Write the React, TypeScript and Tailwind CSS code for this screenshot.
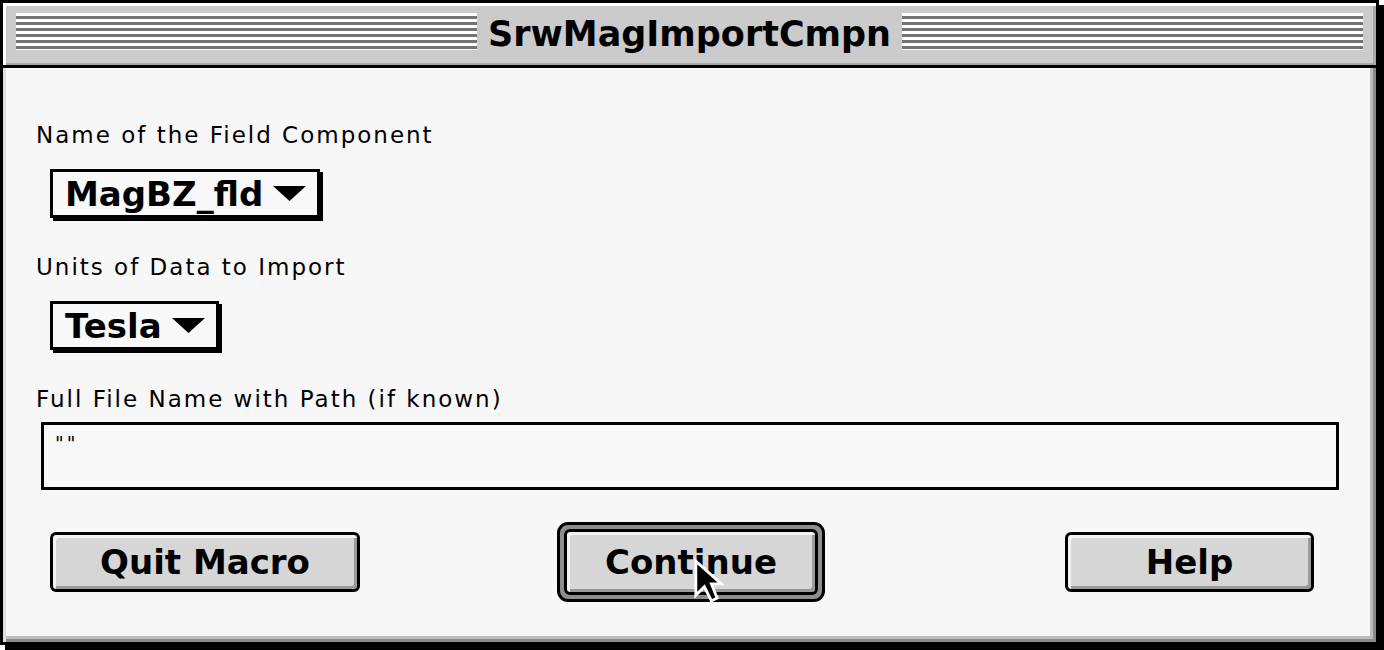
import React from "react";

const labelCls = "text-[23px] leading-[30px] tracking-[2px] text-black";

export default function App() {
  return (
    <div className="w-[1384px] h-[650px] bg-white [font-family:'DejaVu_Sans',sans-serif] text-black">
      <div className="w-[1379px] h-[645px] border-[3px] border-black shadow-[5px_5px_0_#000] flex flex-col">
        <TitleBar title="SrwMagImportCmpn" />
        <div className="flex-1 flex flex-col bg-[#f7f7f7] shadow-[inset_3px_0_0_#dedede,inset_-3px_-3px_0_#8a8a8a,inset_-6px_-6px_0_#bdbdbd] pl-[33px]">
          <div className={`${labelCls} mt-[52px]`}>Name of the Field Component</div>
          <PopUp value="MagBZ_fld" className="mt-[19px]" />
          <div className={`${labelCls} mt-[34px]`}>Units of Data to Import</div>
          <PopUp value="Tesla" className="mt-[19px]" />
          <div className={`${labelCls} mt-[34px]`}>Full File Name with Path (if known)</div>
          <div className="mt-[8px] ml-[5px] w-[1298px] h-[68px] border-[3px] border-black bg-[#f8f8f8] pl-[11px] pt-[6px] text-[19px] leading-[24px] tracking-[3px]">
            ""
          </div>
          <div className="mt-[32px] flex items-center h-[80px]">
            <Button label="Quit Macro" className="ml-[14px] w-[310px]" />
            <div className="relative ml-[197px] w-[268px] h-[80px] rounded-[11px] border-[3px] border-black bg-[#8e8e8e] p-[4px] flex">
              <Button label="Continue" className="w-full h-full" />
              <Cursor />
            </div>
            <Button label="Help" className="ml-[240px] w-[249px]" />
          </div>
        </div>
      </div>
    </div>
  );
}

const TitleBar: React.FC<{ title: string }> = ({ title }) => {
  return (
    <div className="h-[65px] shrink-0 border-b-[3px] border-black bg-[#cbcbcb] shadow-[inset_3px_3px_0_#fff,inset_-3px_-2px_0_#a8a8a8] flex items-start px-[13px]">
      <Stripes />
      <div className="px-[11px] h-[62px] flex items-center text-[35px] font-bold leading-none">{title}</div>
      <Stripes />
    </div>
  );
};

const Stripes = () => (
  <div className="flex-1 mt-[10px] h-[37px] bg-[repeating-linear-gradient(to_bottom,#ffffff_0px,#ffffff_3px,#737373_3px,#737373_6px)]" />
);

type PopUpProps = { value: string; className?: string };

const PopUp: React.FC<PopUpProps> = ({ value, className }) => {
  return (
    <div className={`self-start ml-[14px] h-[49px] border-[3px] border-black bg-[#f8f8f8] shadow-[3px_3px_0_#000] flex items-center pl-[12px] pr-[11px] ${className ?? ""}`}>
      <span className="text-[34px] font-bold leading-none">{value}</span>
      <svg width="33" height="15" viewBox="0 0 33 15" className="ml-[10px]">
        <polygon points="0,0 33,0 16.5,15" fill="#000" />
      </svg>
    </div>
  );
};

type ButtonProps = { label: string; className?: string };

const Button: React.FC<ButtonProps> = ({ label, className }) => {
  return (
    <div className={`h-[60px] rounded-[6px] border-[3px] border-black bg-[#d6d6d6] shadow-[inset_3px_3px_0_#f2f2f2,inset_-3px_-3px_0_#9a9a9a] flex items-center justify-center text-[34px] font-bold leading-none ${className ?? ""}`}>
      {label}
    </div>
  );
};

const Cursor = () => (
  <svg width="34" height="49" viewBox="0 0 12 17" className="absolute left-[133px] top-[33px]">
    <polygon points="1,1 1,13 4,10 6.5,15 8.5,14 6.5,9 10,9" fill="#000" stroke="#fff" strokeWidth="1" strokeLinejoin="miter" />
  </svg>
);
